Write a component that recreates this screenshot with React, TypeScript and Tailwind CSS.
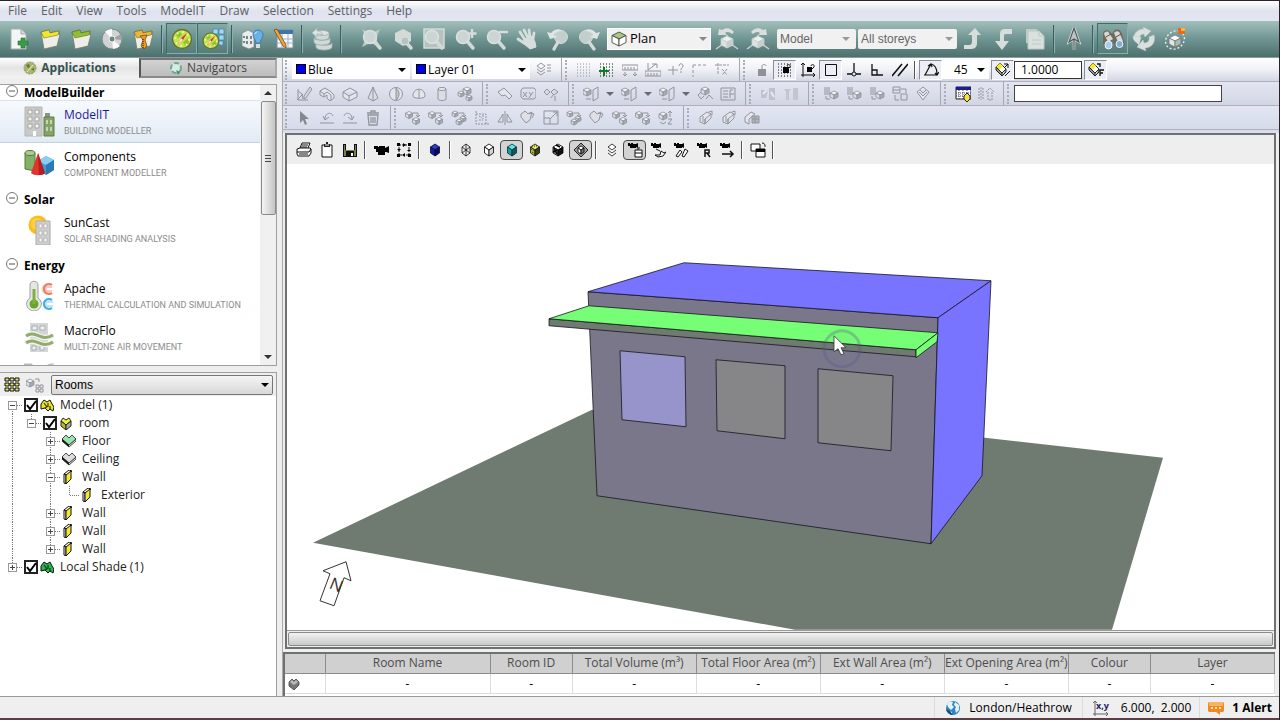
import { Fragment, useState } from "react";
import type { ReactNode } from "react";
import clsx from "clsx";

const menus = ["File", "Edit", "View", "Tools", "ModelIT", "Draw", "Selection", "Settings", "Help"];

type CubeProps = { x: number; y: number; s?: number; w?: number; t?: string; l?: string; r?: string; k?: string };

const Cube = ({ x, y, s = 4, w = s, t = "#f4f5f9", l = "#dcdee6", r = "#a9abb2", k = "#8d8f97" }: CubeProps) => (
  <g stroke={k} strokeWidth="0.8" strokeLinejoin="round">
    <path d={`M${x} ${y - s}L${x + w} ${y - s / 2}L${x} ${y}L${x - w} ${y - s / 2}Z`} fill={t} />
    <path d={`M${x - w} ${y - s / 2}L${x} ${y}V${y + s}L${x - w} ${y + s / 2}Z`} fill={l} />
    <path d={`M${x + w} ${y - s / 2}L${x} ${y}V${y + s}L${x + w} ${y + s / 2}Z`} fill={r} />
  </g>
);

const Camera = () => <path d="M1 1h2v1h1V1h2v1h3l2-1v5l-2-1v1H3V4H1Z" fill="#000" />;

const Lens = () => (
  <>
    <path d="M14 14l6 7" stroke="#d0d9d7" strokeWidth="3.5" strokeLinecap="round" />
    <circle cx="10" cy="10" r="6.5" fill="#cbd5d3" stroke="#dae1df" strokeWidth="1.5" />
  </>
);

const folder = (top: string, key: string) => (
  <>
    <path key={key} d="M3 5l8-2 1 3 9-2v4L5 11Z" fill={top} stroke="#5d6a2c" strokeWidth="0.7" />
    <path d="M3 5l3 5 16-3-3 12-13 3Z" fill="#eeeee6" stroke="#777a70" strokeWidth="0.8" />
    <path d="M3 5l8-2 1 3 9-2-1 4-14 3Z" fill={top} stroke="#5d6a2c" strokeWidth="0.5" />
  </>
);

const compass = (
  <>
    <circle cx="12" cy="12" r="9.5" fill="#cbe04f" stroke="#5e7724" strokeWidth="1.4" />
    <path d="M6 7l4-2 2 3-4 3ZM13 15l5-4 1 5-4 3Z" fill="#8fc42c" />
    <circle cx="12" cy="12" r="7" fill="none" stroke="#f1f6c0" strokeDasharray="1.5 4" strokeWidth="2" />
    <path d="M8 17l3-6 6-5-4 7Z" fill="#d33c28" />
    <path d="M8 17l3-6 2 2Z" fill="#f2efe4" />
  </>
);

// 24px drawings of the main toolbar
const big: Record<string, ReactNode> = {
  new: (
    <>
      <path d="M4 2h10l5 5v15H4Z" fill="#f4f6f5" stroke="#a5adab" />
      <path d="M14 2v5h5" fill="#d5dbd9" stroke="#a5adab" />
      <path d="M14 11h4v3h3v4h-3v3h-4v-3h-3v-4h3Z" fill="#3b9a45" stroke="#27742f" strokeWidth="0.6" />
    </>
  ),
  open: folder("#f3e52b", "y"),
  recent: folder("#91bf2e", "g"),
  disc: (
    <>
      <circle cx="12" cy="12" r="10" fill="#d0d3d3" stroke="#7f8886" />
      <path d="M12 12L5 4.500A10 10 0 0 1 12 2ZM12 12l8 7a10 10 0 0 1-7 3Z" fill="#fafafa" />
      <path d="M12 12L21 7a10 10 0 0 1 1 6Z" fill="#9da4a3" />
      <circle cx="12" cy="12" r="3" fill="#6f8583" stroke="#f0f0f0" />
    </>
  ),
  archive: (
    <>
      {folder("#f2b437", "o")}
      <path d="M9 9l7-1-2 5 2 6-3 3-3-3 2-6Z" fill="#e79b26" stroke="#784c14" strokeWidth="0.8" />
      <path d="M12 12v9" stroke="#5f3b10" strokeDasharray="1 1" strokeWidth="1.5" />
    </>
  ),
  compass,
  compassApps: (
    <>
      <path d="M12 2h5v5h-5ZM18 2h5v5h-5ZM18 8h5v5h-5ZM18 14h4v4h-4Z" fill="#a9d5ee" stroke="#3f8ab7" strokeWidth="0.8" />
      <g transform="translate(0 4) scale(.82)">{compass}</g>
    </>
  ),
  lighting: (
    <>
      <path d="M2 6l6-3 6 3v14l-5 2-7-3Z" fill="#e9ecec" stroke="#7e8987" strokeWidth="0.8" />
      <path d="M4 9v2M7 9v3M4 14v2M7 14v3M11 9v3M11 14v3" stroke="#576c70" strokeWidth="1.6" />
      <path d="M18 3a5 5 0 0 0-5 5c0 3 3 5 3 8h4c0-3 3-5 3-8a5 5 0 0 0-5-5Z" fill="#68b2e6" stroke="#2e77ad" strokeWidth="0.8" />
      <path d="M16 17h4v4h-4Z" fill="#d8dcdc" />
      <path d="M15 7c0-1 1-2 2-2" stroke="#e3f3fd" fill="none" />
    </>
  ),
  table: (
    <>
      <path d="M6 3h16v18H6Z" fill="#f5f7fa" stroke="#7e8d9d" />
      <path d="M6 3h16v4H6Z" fill="#3f75ad" />
      <path d="M6 12h16M6 16h16M11 7v14M17 7v14" stroke="#9bb4cd" />
      <path d="M3 3l3-1 9 16v3l-3-2Z" fill="#eda53c" stroke="#75481d" strokeWidth="0.8" />
    </>
  ),
  database: (
    <g fill="#d0d9d7" stroke="#a4b4b0" strokeWidth="0.8">
      <path d="M6 16v4c0 4 16 4 16 0v-4c0 3-16 3-16 0Z" />
      <path d="M4 11v4c0 4 16 4 16 0v-4c0 3-16 3-16 0Z" />
      <path d="M5 6v4c0 4 14 4 14 0V6Z" />
      <ellipse cx="12" cy="6" rx="7" ry="2.500" fill="#dde4e2" />
      <path d="M2 6l5-5v3c4 0 5 2 6 4-2-1-4-1-6-1v3Z" fill="#dde4e2" />
    </g>
  ),
  zoomExtents: (
    <>
      <path d="M2 2l6 3h6l6-3-3 7v5l3 6-7-3H8l-6 3 3-7V8Z" fill="#bccac7" />
      <Lens />
    </>
  ),
  zoomObject: (
    <>
      <path d="M12 2l8 4v8l-8 5-8-5V6Z" fill="#d3dbd9" />
      <path d="M14 14l6 7" stroke="#d0d9d7" strokeWidth="3.5" strokeLinecap="round" />
      <circle cx="14" cy="14" r="4" fill="#b5c4c1" stroke="#d8dfdd" />
    </>
  ),
  zoomWindow: (
    <>
      <path d="M2 2h20v19H2Z" fill="#b4c3c0" stroke="#d3dbd9" strokeWidth="1.500" />
      <Lens />
    </>
  ),
  zoomIn: (
    <>
      <Lens />
      <path d="M19 2v9M14.500 6.500h9" stroke="#d6dedc" strokeWidth="2.400" />
    </>
  ),
  zoomOut: (
    <>
      <Lens />
      <path d="M15 5h9" stroke="#d6dedc" strokeWidth="2.400" />
    </>
  ),
  pan: (
    <g fill="none" stroke="#d6dedc" strokeLinecap="round" strokeWidth="2.800">
      <path d="M10 13L5 5M13 11L9 3M15 10L14 3M18 12L19 6M9 16l-6-4" />
      <path d="M9 12l8-3 3 6 1 5-6 2-6-5Z" fill="#d6dedc" strokeWidth="1" strokeLinejoin="round" />
    </g>
  ),
  zoomPrev: (
    <>
      <circle cx="15" cy="10" r="6.500" fill="#c3cfcc" stroke="#d3dbd9" />
      <path d="M12 15l-4 7" stroke="#d3dbd9" strokeWidth="3.200" strokeLinecap="round" />
      <path d="M4 12L1 5l4 1c3-4 8-5 12-2-5 0-7 1-9 4l3 2Z" fill="#dfe5e4" />
    </>
  ),
  zoomNext: (
    <>
      <circle cx="9" cy="10" r="6.500" fill="#c3cfcc" stroke="#d3dbd9" />
      <path d="M12 15l5 7" stroke="#d3dbd9" strokeWidth="3.200" strokeLinecap="round" />
      <path d="M20 12l3-7-4 1c-3-4-8-5-12-2 5 0 7 1 9 4l-3 2Z" fill="#dfe5e4" />
    </>
  ),
  rotateLeft: (
    <>
      <path d="M1 22l7-5M23 22l-7-5M12 8v4" stroke="#c8d2d0" strokeWidth="1.500" />
      <Cube x={12} y={15} s={6} t="#eef1f0" l="#dde3e2" r="#c3cfcc" k="#c8d2d0" />
      <path d="M3 8l1-6 3 1c4-3 9-2 12 2l-2 2c-2-2-5-3-7-1l2 2Z" fill="#d8dfdd" />
    </>
  ),
  rotateRight: (
    <>
      <path d="M1 22l7-5M23 22l-7-5M12 8v4" stroke="#c8d2d0" strokeWidth="1.500" />
      <Cube x={12} y={15} s={6} t="#eef1f0" l="#dde3e2" r="#c3cfcc" k="#c8d2d0" />
      <path d="M21 8l-1-6-3 1c-4-3-9-2-12 2l2 2c2-2 5-3 7-1l-2 2Z" fill="#d8dfdd" />
    </>
  ),
  levelUp: <path d="M3 18l5 0c2 0 3-1 3-4V8H7l7-7 6 7h-4v8c0 5-3 6-7 6H3Z" fill="#d6dddb" />,
  levelDown: <path d="M20 2h-7c-4 0-5 2-5 6v6H3l7 9 7-9h-5V9c0-2 1-2 3-2h5Z" fill="#d6dddb" />,
  copy: (
    <>
      <path d="M3 2h11v14H3Z" fill="#c0ccca" />
      <path d="M5 4h11l5 5v13H5Z" fill="#d9e0de" stroke="#bccac7" />
      <path d="M16 4v5h5M9 13h9M9 17h9" stroke="#bccac7" fill="none" />
    </>
  ),
  north: (
    <>
      <path d="M12 1l5 14-5-3-5 3ZM12 12v11" fill="none" stroke="#e6ebea" strokeWidth="2.500" />
      <path d="M12 1l5 14-5-3-5 3ZM12 12v11" fill="#bcc7c5" stroke="#4e5958" strokeWidth="1.200" />
    </>
  ),
  binoculars: (
    <>
      <path d="M2 7c0-4 5-5 7-2l2 2 2-3c3-3 7-1 8 3l3 10-5 5-5-3-3-6-1 4-4 4-4-4Z" fill="#6e6a62" />
      <path d="M3 7c1-3 4-3 5-1l4 6-5 3ZM13 6c2-3 6-2 6 1l3 7-4 3Z" fill="#d9d7d0" />
      <path d="M5 10l5-3M15 10l5-3" stroke="#5a554c" />
      <ellipse cx="7.500" cy="18" rx="3.500" ry="4" fill="#a7cdea" stroke="#f0f3f5" />
      <ellipse cx="18.500" cy="17" rx="3.500" ry="3.500" fill="#7db1db" stroke="#f0f3f5" />
    </>
  ),
  refresh: (
    <g fill="#d9e0de" stroke="#c3cfcc" strokeWidth="0.500">
      <path d="M2 13C1 6 6 2 12 2l-1-2 8 4-6 6-1-3c-4 0-5 3-4 6Z" />
      <path d="M22 8c2 8-3 13-9 13l1 3-9-4 6-7 1 3c4 0 6-3 5-6Z" />
      <path d="M1 9l8 1-2 8-2-2c-3-2-4-4-4-7Z" />
    </g>
  ),
  orbit: (
    <>
      <ellipse cx="12" cy="13" rx="10" ry="8.500" transform="rotate(-40 12 13)" fill="none" stroke="#e8eded" strokeDasharray="2 2" strokeWidth="1.400" />
      <Cube x={12} y={14} s={6} t="#ffffff" l="#e4e7e7" r="#b0b9b8" k="#6d7877" />
      <path d="M15 1h7v6h-7Z" fill="#e66a1d" />
      <path d="M18 1h4v3h-4Z" fill="#f9b142" />
    </>
  ),
};

const gray = { stroke: "#92949c", fill: "none", strokeWidth: 1 };
const dark = { stroke: "#111", fill: "none", strokeWidth: 1 };
const arrow = <path d="M8 3h5v4M11 5l2 2 2-2" {...gray} />;
const distance = (
  <>
    <path d="M1 5l4-4 6 6-4 4Z" fill="#fff" stroke="#222" />
    <path d="M1 5l4-4 3 3-4 4Z" fill="#f3ea28" />
    <path d="M1 5l6 6v3L1 8ZM11 7v3l-4 4" fill="#999" stroke="#222" />
  </>
);

// 16px drawings of the small toolbars
const small: Record<string, ReactNode> = {
  layers: (
    <>
      <path d="M1 4l4-3 4 3-4 3ZM1 7l4 3 4-3M1 10l4 3 4-3" {...gray} />
      <path d="M11 3h4M11 6h4M11 9h4" {...gray} />
    </>
  ),
  grid: <path d="M1 2h15M1 5h15M1 8h15M1 11h15M1 14h15" {...gray} strokeDasharray="1 2" />,
  gridAxis: (
    <>
      <path d="M1 2h15M1 5h15M1 8h15M1 11h15M1 14h15" {...dark} strokeDasharray="1 2" />
      <path d="M5 5v9M0 9h10" stroke="#0d7a24" strokeWidth="2" />
    </>
  ),
  ruler: <path d="M0 3h16v5H0ZM3 5v3M6 5v3M9 5v3M12 5v3M3 10v4M13 10v4M1 12l2 2 2-2M11 12l2 2 2-2" {...gray} />,
  rulerAxis: <path d="M0 9h16v5H0ZM3 11v3M6 11v3M9 11v3M12 11v3M3 8V1M3 8l8-6M7 2h5v4" {...gray} />,
  query: (
    <>
      <path d="M5 4v9M0 8h10" {...gray} />
      <path d="M11 4c0-3 4-3 4 0 0 2-2 1-2 4M13 9v2" {...gray} />
    </>
  ),
  dashA: <path d="M2 3h13M2 3v12" {...gray} strokeDasharray="3 2" />,
  dashB: <path d="M1 3h14M4 1v12M8 7l5 6M13 7l-5 6" {...gray} strokeDasharray="3 1" />,
  lock: (
    <>
      <path d="M4 7h8v7H4Z" fill="#8f9198" />
      <path d="M8 7V4c0-2 4-2 4 0" {...gray} />
    </>
  ),
  snapGrid: (
    <>
      <path d="M1 2h15M1 5h15M1 8h15M1 11h15M1 14h15" {...dark} strokeDasharray="1 2" />
      <path d="M6 5h6v6H6Z" fill="#000" />
      <path d="M10 4c0-2 4-2 3 1l-2 2" {...dark} />
    </>
  ),
  snapAxis: (
    <>
      <path d="M3 1v12h12M1 3l2-2 2 2M13 11l2 2-2 2M1 13h2v2" {...dark} />
      <path d="M7 5h5v5H7Z" fill="#000" />
      <path d="M11 4c0-2 4-2 3 1l-2 2" {...dark} />
    </>
  ),
  square: <path d="M2.500 2.500h11v11h-11Z" {...dark} />,
  perp: (
    <>
      <path d="M8 1v9M1 12h5M10 12h5" {...dark} strokeWidth="1.300" />
      <circle cx="8" cy="12" r="2" {...dark} />
    </>
  ),
  corner: <path d="M3 2v11h11M3 8h5v5" {...dark} strokeWidth="1.300" />,
  parallel: <path d="M0 14L10 2M6 14L16 2" {...dark} strokeWidth="1.600" />,
  angle: <path d="M1 13h13M2 13L8 2c4 1 6 5 6 10M5 4l3-2 1 3M12 11l2 2 2-3" {...dark} strokeWidth="1.200" />,
  lockDist: (
    <>
      {distance}
      <path d="M9 2h4v4M9 6l4-4M10 14l5-5" {...dark} />
    </>
  ),
  lockFactor: (
    <>
      {distance}
      <path d="M9 2h3v3M12 14V8h4M12 11h3" {...dark} strokeWidth="1.300" />
    </>
  ),
  draw: (
    <>
      <path d="M2 3v11h10M2 5l4 3 1 5M1 14l6-6" {...gray} />
      <path d="M14 1l2 2-6 9-2 1v-3Z" {...gray} fill="#d7d9e1" />
    </>
  ),
  shapeL: <path d="M1 5l5-3 5 3 4 4v3l-4 3-3-3V9L5 11 1 9ZM1 5l4 3 3-2 4 3v5M5 8v3" {...gray} fill="#e5e6ed" />,
  prism: <path d="M1 6l7-4 7 4v5l-8 4-6-4ZM1 6l6 4 8-4M7 10v5" {...gray} fill="#e5e6ed" />,
  cone: <path d="M8 1L3 12l5 3 5-3ZM8 1v14" {...gray} fill="#dcdde4" />,
  sphere: (
    <>
      <circle cx="8" cy="8" r="6.500" {...gray} fill="#e5e6ed" />
      <path d="M8 2v12c3-2 5-8 0-12" {...gray} fill="#c3c5cd" />
    </>
  ),
  dome: <path d="M2 10c0-9 12-9 12 0 0 3-12 3-12 0M8 4v8" {...gray} fill="#e5e6ed" />,
  cylinder: (
    <>
      <path d="M4 3v10c0 2 8 2 8 0V3" {...gray} fill="#dcdde4" />
      <ellipse cx="8" cy="3" rx="4" ry="1.500" {...gray} fill="#eceef4" />
    </>
  ),
  cubes: (
    <>
      <Cube x={10} y={5} s={4} />
      <Cube x={4} y={8} s={3} />
      <Cube x={12} y={12} s={3} />
    </>
  ),
  plane: <path d="M1 6l6-4 8 8-3 3-4-4-3 1Z" {...gray} fill="#e5e6ed" />,
  xy: (
    <>
      <path d="M1 4l2-2h11l2 2v7l-2 2H3l-2-2Z" {...gray} />
      <path d="M3 6l4 5M7 6l-4 5M9 6l2 3M13 6l-4 6" {...gray} />
    </>
  ),
  points: <path d="M1 6l3-3 3 3-3 3ZM8 6l3-3 4 3-4 3ZM8 12l2-3M12 10v5" {...gray} fill="#d9dae2" />,
  door: (
    <>
      <Cube x={4} y={6} s={4} />
      <path d="M10 4l5-3v11l-5 3ZM3 13h5" {...gray} />
    </>
  ),
  cluster: (
    <>
      <Cube x={8} y={5} s={4} />
      <path d="M1 9l3-3M1 9l3 4 3-3M9 13l3-4 4 4" {...gray} />
    </>
  ),
  plan: <path d="M1 2h14v12H1ZM3 5h5M3 8h5M3 11h5M10 4v8M10 8h4M10 4h3" {...gray} />,
  stack: (
    <>
      <path d="M1 2h6M1 4h6M1 6h6M1 8h6M3 10v3h4" {...gray} />
      <Cube x={11} y={9} s={4} />
    </>
  ),
  boxesLinked: <path d="M1 1h7v6H1ZM9 8h6v6H9ZM1 4h7M9 3h5v4M3 9v5h4" {...gray} />,
  tiles: <path d="M8 1l6 5-6 8-6-8ZM4 6l4 4 4-4M5 4l3 3 3-3" {...gray} fill="#e8e9f0" />,
  faded: (
    <>
      <path d="M1 4h7l-2 8H1ZM9 2h6v12H9Z" fill="#bfc2cc" />
      <path d="M3 8l4-4M11 6l3 5" stroke="#e9eaf0" strokeWidth="2" />
    </>
  ),
  hammer: <path d="M1 3h7l-2 3v8H3V6ZM10 2h5v12h-5Z" fill="#c3c6cf" />,
  tableView: (
    <>
      <path d="M1 1h15v12H1Z" fill="#fff" stroke="#222" />
      <path d="M1 1h15v3H1Z" fill="#1b1b9b" />
      <path d="M1 7h15M1 10h15M4 4v9M8 4v9M12 4v9" stroke="#444" strokeDasharray="1 1" />
      <path d="M12 7l3 3v3l-3 3-3-3v-3Z" fill="#f4e63a" stroke="#222" />
    </>
  ),
  sort: <path d="M3 1v13M1 2v11M5 2v11M8 6l4-4 4 4M10 6v8h4V6" {...gray} strokeDasharray="2 1" />,
  pointer: <path d="M4 1v12l3-3 2 5 2-1-2-5h4Z" fill="#85878f" />,
  undo: <path d="M1 13h14M6 9c0-7 7-7 8-3M4 6l2 4 4-3" {...gray} />,
  redo: <path d="M1 13h14M10 9c0-7-7-7-8-3M12 6l-2 4-4-3" {...gray} />,
  trash: <path d="M3 5h10l-1 10H4ZM2 3h12M6 3V1h4v2M6 7v6M8 7v6M10 7v6" {...gray} strokeWidth="1.300" />,
  copyCube: (
    <>
      <Cube x={4} y={5} s={3.5} />
      <Cube x={11} y={11} s={3.5} />
      {arrow}
    </>
  ),
  arrayCube: (
    <>
      <Cube x={4} y={4} s={3} />
      <Cube x={12} y={9} s={3} />
      <Cube x={8} y={12} s={3} />
      {arrow}
    </>
  ),
  bounds: <path d="M2 1v13h14M2 4h10v10M5 6l3 2M9 5v4M5 10h4" {...gray} strokeDasharray="2 1" />,
  mirror: <path d="M8 1v14M6 4v8H1ZM10 4v8h5Z" {...gray} />,
  turn: (
    <>
      <path d="M1 4l4-3 3 3 4-2-2 8-4 3-5-6Z" {...gray} fill="#dfe0e7" />
      <path d="M9 3l5 1-2 4" {...gray} />
    </>
  ),
  resize: <path d="M1 1h14v13H1ZM1 8h6v6M7 9l7-7M10 2h4v4" {...gray} />,
  heightZ: (
    <>
      <Cube x={5} y={6} s={4} />
      <path d="M12 1v6M10 3l2-2 2 2M10 9h4l-4 5h4M2 12l3 2 3-2" {...gray} />
    </>
  ),
  slab: <path d="M2 7l7-5 4 2-6 5v5l-5-2ZM7 9v5M5 6v6M13 4v4l-6 6M11 2l3-1v4" {...gray} fill="#e5e6ed" />,
  slabGrid: (
    <>
      <path d="M1 7l6-5 4 2-6 5v5l-4-2Z" {...gray} fill="#e5e6ed" />
      <path d="M8 6h7v7H8ZM8 9h7M11 6v7" {...gray} fill="#b3b5bd" />
    </>
  ),
  print: (
    <>
      <path d="M4 6l2-5h8l-2 5" {...dark} fill="#fff" />
      <path d="M1 7l3-1h10l1 1v4l-2 3H2l-1-2ZM1 10h12l2-3M6 3h6M5 5h6M3 12h9" {...dark} fill="#fff" />
    </>
  ),
  clipboard: (
    <>
      <path d="M3 3h10v12H3Z" {...dark} fill="#fff" />
      <path d="M5 2h6v3H5ZM7 0h2v2H7Z" fill="#222" />
      <path d="M6 3h4" stroke="#fff" />
    </>
  ),
  save: (
    <>
      <path d="M1 2h14v13H1Z" fill="#111" />
      <path d="M4 2h8v6H4Z" fill="#efefef" />
      <path d="M2 3v11h2V9h8v5h2V3h-1v5H3V3Z" fill="#7d8347" />
      <path d="M9 11h2v3H9Z" fill="#fff" />
    </>
  ),
  camera: <path d="M1 4h4v1h1V4h6v2l4-2v7l-3-1h-1v3H5v-3H3V7H1Z" fill="#000" />,
  frame: (
    <>
      <path d="M3 3h10v10H3Z" {...dark} strokeDasharray="2 1" />
      <path d="M1 1h3v3H1ZM12 1h3v3h-3ZM1 12h3v3H1ZM12 12h3v3h-3ZM7 1l3 2-3 2ZM9 11l-3 2 3 2ZM1 7l2 2 2-2ZM11 9l2-2 2 2Z" fill="#000" />
    </>
  ),
  navy: <Cube x={8} y={8} s={6} w={4.500} t="#3238c8" l="#1119a8" r="#070c5a" k="#050838" />,
  wire: <path d="M8 2l4 3v6l-4 3-4-3V5ZM8 2v12M4 5l8 6M12 5l-8 6" {...dark} strokeWidth="0.800" />,
  hidden: <Cube x={8} y={8} s={6} w={4.500} t="#fff" l="#fff" r="#d5d5d5" k="#000" />,
  cyan: <Cube x={8} y={8} s={6} w={4.500} t="#58e6e6" l="#13a0a4" r="#0c5b60" k="#052b2e" />,
  olive: (
    <>
      <Cube x={8} y={8} s={6} w={4.500} t="#e6ec64" l="#b7bf35" r="#3b3e18" k="#111" />
      <path d="M4 7l4 2M5 10l3 2M5 4h6" stroke="#222" strokeDasharray="1 1" />
    </>
  ),
  checker: (
    <>
      <Cube x={8} y={8} s={6} w={5} t="#fff" l="#777" r="#111" k="#000" />
      <path d="M4 6l3 6M3 10l4-2M6 3l4 2" stroke="#000" strokeWidth="1.500" />
    </>
  ),
  diamond: (
    <>
      <path d="M8 1l7 7-7 7-7-7Z" fill="#999" stroke="#222" />
      <Cube x={8} y={8} s={4} w={3} t="#fff" l="#fff" r="#777" k="#000" />
    </>
  ),
  sheets: <path d="M8 2l4 3-4 3-4-3ZM4 8l4 3 4-3M4 11l4 3 4-3" {...dark} fill="#fff" strokeWidth="0.800" />,
  camMouse: (
    <>
      <Camera />
      <path d="M8 8h7v7H8ZM8 11h7M11 8V6h2" {...dark} fill="#fff" />
    </>
  ),
  camFly: (
    <>
      <Camera />
      <path d="M5 13h5l1-4 3 2 2-1-3 4-5 1ZM6 7l4 2" {...dark} fill="#fff" />
    </>
  ),
  camWalk: (
    <>
      <Camera />
      <path d="M3 14l4-6 2 2-4 5ZM9 14l3-7 3 2-4 6Z" {...dark} fill="#fff" />
    </>
  ),
  camReset: (
    <>
      <Camera />
      <path d="M9 15V8h4v3H9M11 11l3 4" {...dark} strokeWidth="1.500" />
    </>
  ),
  camMove: (
    <>
      <Camera />
      <path d="M3 12h11M11 9l3 3-3 3" {...dark} strokeWidth="1.500" />
    </>
  ),
  windows: (
    <>
      <path d="M1 2h9v7H1Z" {...dark} fill="#fff" />
      <path d="M6 7h9v8H6Z" {...dark} fill="#fff" />
      <path d="M6 7h9v3H6Z" fill="#000" />
      <path d="M12 1c3 0 3 2 3 4" {...dark} />
    </>
  ),
};

const appIcons: Record<string, ReactNode> = {
  modelit: (
    <>
      <path d="M1 1h17v29H1Z" fill="#c9cac8" stroke="#b4b5b3" />
      <path d="M4 4h4v4H4ZM11 4h4v4h-4ZM4 11h4v4H4ZM11 11h4v4h-4ZM4 18h4v4H4ZM11 18h4v4h-4Z" fill="#f3f3f2" stroke="#a5a6a4" />
      <path d="M9 25h3v5H9Z" fill="#fff" />
      <path d="M21 7h5v4h-5Z" fill="#8b9389" />
      <path d="M20 11h10v19H20Z" fill="#86a267" stroke="#5f7c44" />
      <path d="M22 14h2v4h-2ZM26 14h2v4h-2ZM22 21h2v4h-2ZM26 21h2v4h-2Z" fill="#c3d5b2" />
    </>
  ),
  components: (
    <>
      <path d="M1 5v16l10 2V5Z" fill="#83b168" stroke="#58783f" />
      <ellipse cx="6" cy="5" rx="5" ry="2.500" fill="#a9cf8f" stroke="#58783f" />
      <path d="M14 13l8-5 8 4v10l-8 5-8-5Z" fill="#3f9ad8" />
      <path d="M14 13l8-5 8 4-8 5Z" fill="#89cdf2" />
      <path d="M22 17v10l8-5V12Z" fill="#2a78b4" />
      <path d="M14 5l7 20c-3 3-11 3-14 0Z" fill="#e0342f" />
      <path d="M14 5l7 20c-2 2-4 2-6 2Z" fill="#b51f20" />
    </>
  ),
  suncast: (
    <>
      <circle cx="14" cy="11" r="9.500" fill="#fbbd16" />
      <circle cx="13" cy="10" r="6" fill="#fdd143" />
      <path d="M12 7h14v24H12Z" fill="#cfcfcf" stroke="#aaa" />
      <path d="M15 10h3v4h-3ZM20 10h3v4h-3ZM15 17h3v4h-3ZM20 17h3v4h-3ZM15 24h3v4h-3ZM20 24h3v4h-3Z" fill="#f5f5f5" stroke="#aaa" strokeWidth="0.700" />
    </>
  ),
  apache: (
    <>
      <path d="M6 5c0-5 8-5 8 0v13c7 5 2 13-4 13S-1 23 6 18Z" fill="#e3e6e3" stroke="#9ca19c" />
      <circle cx="10" cy="24" r="4.500" fill="#6aa62d" />
      <path d="M10 24V9" stroke="#7fb044" strokeWidth="3" />
      <circle cx="23" cy="9" r="5.500" fill="#f6c9c1" />
      <circle cx="24" cy="24" r="5.500" fill="#bfe3f7" />
      <path d="M28 5a5 5 0 1 0 0 8" fill="none" stroke="#e87b68" strokeWidth="2" />
      <path d="M28 20a5 5 0 1 0 0 8" fill="none" stroke="#3cabea" strokeWidth="2" />
      <path d="M23 9h6M23 24h6" stroke="#fff" strokeWidth="2" />
    </>
  ),
  macroflo: (
    <>
      <path d="M6 1h18v29H6Z" fill="#d3d5d6" />
      <path d="M8 4h5v4H8ZM16 4h5v4h-5ZM8 24h4v4H8ZM16 24h4v4h-4Z" fill="#f2f2f2" stroke="#aaafb3" />
      <path d="M2 14c10-7 15 7 27-1M2 21c10-7 15 7 27-1" fill="none" stroke="#f4f6ef" strokeWidth="5.500" />
      <path d="M2 14c10-7 15 7 27-1M2 21c10-7 15 7 27-1" fill="none" stroke="#93ab6d" strokeWidth="3" />
    </>
  ),
};

const groups = [
  { name: "ModelBuilder", apps: [
    { id: "modelit", title: "ModelIT", note: "BUILDING MODELLER" },
    { id: "components", title: "Components", note: "COMPONENT MODELLER" },
  ] },
  { name: "Solar", apps: [{ id: "suncast", title: "SunCast", note: "SOLAR SHADING ANALYSIS" }] },
  { name: "Energy", apps: [
    { id: "apache", title: "Apache", note: "THERMAL CALCULATION AND SIMULATION" },
    { id: "macroflo", title: "MacroFlo", note: "MULTI-ZONE AIR MOVEMENT" },
  ] },
];

type Guide = "plusTop" | "plus" | "plusEnd" | "minusTop" | "minus" | "minusEnd" | "line" | "none" | "corner";
type TreeRow = { label: string; guides: Guide[]; icon: string; check?: boolean };

const tree: TreeRow[] = [
  { label: "Model (1)", guides: ["minusTop"], icon: "model", check: true },
  { label: "room", guides: ["line", "minusEnd"], icon: "room", check: true },
  { label: "Floor", guides: ["line", "none", "plus"], icon: "floor" },
  { label: "Ceiling", guides: ["line", "none", "plus"], icon: "ceiling" },
  { label: "Wall", guides: ["line", "none", "minus"], icon: "wall" },
  { label: "Exterior", guides: ["line", "none", "line", "corner"], icon: "wall" },
  { label: "Wall", guides: ["line", "none", "plus"], icon: "wall" },
  { label: "Wall", guides: ["line", "none", "plus"], icon: "wall" },
  { label: "Wall", guides: ["line", "none", "plusEnd"], icon: "wall" },
  { label: "Local Shade (1)", guides: ["plusEnd"], icon: "shade", check: true },
];

const heart = (fill: string) => (
  <>
    <path d="M0 5v2l7 6 7-6V5L7 11Z" fill="#fff" stroke="#111" strokeWidth="0.800" />
    <path d="M0 5l4-4 3 3 3-3 4 4-7 6Z" fill={fill} stroke="#222" strokeWidth="0.800" />
    <path d="M0 5v2l7 6v-2Z" fill="#111" />
  </>
);

const bunch = (c: string, d: string) => (
  <>
    <path d="M1 6l3-4 3 2 3-2 2 4 2 3-1 4-3-2-2 2-3-3-4 1Z" fill={c} stroke="#111" />
    <path d="M4 5l3 4M8 5v4M10 8v4M5 10l3-2" stroke={d} strokeWidth="1.200" />
  </>
);

const treeIcons: Record<string, ReactNode> = {
  model: bunch("#e8e32d", "#3a3a0b"),
  shade: bunch("#2eb552", "#0b3d18"),
  room: (
    <>
      <path d="M2 5l2-3 3 2 3-2 2 3-5 4Z" fill="#eef03a" stroke="#222" />
      <path d="M2 5l5 4v5l-5-4Z" fill="#b9b92c" stroke="#222" />
      <path d="M12 5L7 9v5l5-4Z" fill="#aaa" stroke="#222" />
    </>
  ),
  floor: heart("#94e8ae"),
  ceiling: heart("#dddddd"),
  wall: (
    <>
      <path d="M2 4l5-4 3 1-5 4Z" fill="#fffef0" stroke="#111" />
      <path d="M2 4l2 1v9l-2-1Z" fill="#fff" stroke="#111" />
      <path d="M4 5l5-4v8l-5 5Z" fill="#f5e92c" stroke="#111" />
    </>
  ),
};

const columns = [
  { label: "", width: "w-[40px]" },
  { label: "Room Name", width: "w-[165px]" },
  { label: "Room ID", width: "w-[82px]" },
  { label: "Total Volume (m³)", width: "w-[124px]" },
  { label: "Total Floor Area (m²)", width: "w-[124px]" },
  { label: "Ext Wall Area (m²)", width: "w-[124px]" },
  { label: "Ext Opening Area (m²)", width: "w-[124px]" },
  { label: "Colour", width: "w-[82px]" },
  { label: "Layer", width: "w-[124px]" },
];

const Caret = ({ className }: { className?: string }) => (
  <svg viewBox="0 0 8 4" className={clsx("pointer-events-none h-1 w-2", className)}>
    <path d="M0 0h8L4 4Z" fill="currentColor" />
  </svg>
);

const MainButton = ({ name, on }: { name: string; on?: boolean }) => (
  <button
    type="button"
    aria-label={name}
    className={clsx("flex h-[31px] w-[31px] shrink-0 items-center justify-center", on && "border border-[#86b0ad] border-t-[#3c6d6b] border-l-[#3c6d6b] bg-[#5e8785]/30")}
  >
    <svg viewBox="0 0 24 24" className="h-6 w-6">{big[name]}</svg>
  </button>
);

const MainSep = () => <span className="mx-[3px] h-7 w-0.5 shrink-0 border-r border-[#8fb0ae] bg-[#35605f]" />;

const Tool = ({ name, on, rounded }: { name: string; on?: boolean; rounded?: boolean }) => (
  <button
    type="button"
    aria-label={name}
    className={clsx(
      "flex h-5 w-[23px] shrink-0 items-center justify-center",
      on && !rounded && "border border-[#8a8d98] border-r-white border-b-white bg-[#eceef5]",
      on && rounded && "rounded-sm border border-[#4a4a4a] bg-[#d3d3d3]",
    )}
  >
    <svg viewBox="0 0 16 16" className="h-4 w-4">{small[name]}</svg>
  </button>
);

const Tools = ({ names }: { names: string[] }) => names.map((name, i) => <Tool key={i} name={name} />);

const Group = ({ children, last }: { children: ReactNode; last?: boolean }) => (
  <div className={clsx("mr-px flex h-full shrink-0 items-center pr-1.5", !last && "border-r border-[#a5a8b3]")}>
    <span className="mr-1 ml-0.5 h-5 w-[3px] border-l-2 border-dotted border-[#a9acb8]" />
    {children}
  </div>
);

const ViewSep = () => <span className="mx-[3px] h-[18px] w-0.5 shrink-0 border-r border-white bg-[#555]" />;

type PickProps = { label: string; value: string; className: string; selectClass: string; caretClass?: string; icon?: ReactNode };

const Pick = ({ label, value, className, selectClass, caretClass, icon }: PickProps) => (
  <div className={clsx("relative shrink-0", className)}>
    <select aria-label={label} className={clsx("block h-full w-full appearance-none outline-none", selectClass)}>
      <option>{value}</option>
    </select>
    {icon}
    <Caret className={clsx("absolute top-1/2 -mt-0.5", caretClass)} />
  </div>
);

const Swatch = () => <span className="pointer-events-none absolute top-1 left-1 h-[10px] w-[10px] border border-black bg-[#0000f0]" />;

const GuideCell = ({ kind }: { kind: Guide }) => {
  const toggle = kind.startsWith("plus") || kind.startsWith("minus");
  const up = kind !== "none" && kind !== "minusTop" && kind !== "plusTop";
  const down = kind === "line" || kind === "plus" || kind === "minus" || kind.endsWith("Top");
  return (
    <svg viewBox="0 0 19 18" className="h-[18px] w-[19px] shrink-0">
      <g stroke="#777" strokeDasharray="1 1" fill="none">
        {up && <path d="M9.500 0v9" />}
        {down && <path d="M9.500 9v9" />}
        {(toggle || kind === "corner") && <path d="M10 9.500h9" />}
      </g>
      {toggle && (
        <>
          <rect x="5.500" y="5.500" width="8" height="8" fill="#fff" stroke="#999" />
          <path d={kind.startsWith("plus") ? "M7 9.500h5M9.500 7v5" : "M7 9.500h5"} stroke="#445" />
        </>
      )}
    </svg>
  );
};

const MainToolbar = () => (
  <div className="flex h-[37px] shrink-0 items-center overflow-hidden border-b border-[#8b9c9a] bg-linear-to-b from-[#a3bfbc] via-[#6f9592] to-[#4c706e] pb-px pl-[3px]">
    {["new", "open", "recent", "disc", "archive"].map((n) => <MainButton key={n} name={n} />)}
    <MainSep />
    <MainButton name="compass" on />
    <MainButton name="compassApps" on />
    <MainSep />
    <MainButton name="lighting" />
    <MainButton name="table" />
    <MainSep />
    <MainButton name="database" />
    <MainSep />
    <div className="ml-[11px] flex">
      {["zoomExtents", "zoomObject", "zoomWindow", "zoomIn", "zoomOut", "pan", "zoomPrev", "zoomNext"].map((n) => (
        <MainButton key={n} name={n} />
      ))}
    </div>
    <Pick
      label="View"
      value="Plan"
      className="ml-[3px] h-[22px] w-[104px]"
      selectClass="bg-[#f1f1f1] border border-white pl-[22px] text-[13px] text-black"
      caretClass="right-1 text-[#888]"
      icon={
        <svg viewBox="0 0 16 16" className="pointer-events-none absolute top-[3px] left-1 h-4 w-4">
          <Cube x={8} y={8} s={7} t="#a9c97f" l="#fff" r="#fff" k="#333" />
        </svg>
      }
    />
    <MainButton name="rotateLeft" />
    <MainButton name="rotateRight" />
    <Pick
      label="Model view"
      value="Model"
      className="ml-1 h-5 w-[79px]"
      selectClass="rounded-xs bg-[#f1f1f1] pl-[3px] font-['Liberation_Sans'] text-xs text-[#666]"
      caretClass="right-1.5 text-[#999]"
    />
    <Pick
      label="Storeys"
      value="All storeys"
      className="ml-0.5 h-5 w-[99px]"
      selectClass="rounded-xs bg-[#f1f1f1] pl-[3px] font-['Liberation_Sans'] text-xs text-[#666]"
      caretClass="right-1 text-[#999]"
    />
    <MainButton name="levelUp" />
    <MainButton name="levelDown" />
    <MainButton name="copy" />
    <MainSep />
    <MainButton name="north" />
    <MainSep />
    <MainButton name="binoculars" on />
    <MainButton name="refresh" />
    <MainButton name="orbit" />
  </div>
);

const bar = "flex h-6 items-center overflow-hidden border-b border-[#aeb1bd] bg-linear-to-b";

const DrawToolbars = () => (
  <div className="shrink-0 bg-[#d9ddec] pb-[3px]">
    <div className={clsx(bar, "from-white via-[#f0f1f6] to-[#d4d7e3]")}>
      <Group>
        <Pick label="Colour" value="Blue" className="h-[19px] w-[118px]" selectClass="bg-white pl-4 text-xs text-black" caretClass="right-1" icon={<Swatch />} />
        <Pick label="Layer" value="Layer 01" className="ml-0.5 h-[19px] w-[118px]" selectClass="bg-white pl-4 text-xs text-black" caretClass="right-1" icon={<Swatch />} />
        <span className="w-0.5" />
        <Tool name="layers" />
      </Group>
      <Group>
        <Tools names={["grid", "gridAxis", "ruler", "rulerAxis", "query", "dashA", "dashB"]} />
      </Group>
      <Group last>
        <Tool name="lock" />
        <Tool name="snapGrid" on />
        <Tool name="snapAxis" />
        <Tool name="square" on />
        <Tools names={["perp", "corner", "parallel"]} />
        <ViewSep />
        <Tool name="angle" on />
        <Pick label="Angle" value="45" className="h-[19px] w-[47px]" selectClass="bg-white pl-3 text-xs text-black" caretClass="right-1" />
        <span className="w-0.5" />
        <Tool name="lockDist" on />
        <input aria-label="Distance" defaultValue="1.0000" className="h-[18px] w-[68px] border border-[#333] bg-white px-1.5 text-xs text-black" />
        <span className="w-0.5" />
        <Tool name="lockFactor" on />
      </Group>
    </div>
    <div className={clsx(bar, "from-[#e3e6f1] to-[#d2d6e4]")}>
      <Group>
        <Tools names={["draw", "shapeL", "prism", "cone", "sphere", "dome", "cylinder", "cubes"]} />
      </Group>
      <Group>
        <Tools names={["plane", "xy", "points"]} />
      </Group>
      <Group>
        {[0, 1, 2].map((i) => (
          <Fragment key={i}>
            <Tool name="door" />
            <button type="button" aria-label="More" className="flex h-5 w-[15px] items-center justify-center text-[#666a76]"><Caret /></button>
          </Fragment>
        ))}
        <Tools names={["cluster", "plan"]} />
      </Group>
      <Group>
        <Tools names={["faded", "hammer"]} />
      </Group>
      <Group>
        <Tools names={["stack", "stack", "stack", "boxesLinked", "tiles"]} />
      </Group>
      <Group>
        <Tools names={["tableView", "sort"]} />
      </Group>
      <Group last>
        <input aria-label="Command" className="h-[17px] w-[208px] border border-[#444] bg-white px-1 text-xs" />
      </Group>
    </div>
    <div className={clsx(bar, "from-[#e3e6f1] to-[#d6dbeb]")}>
      <Group>
        <Tools names={["pointer", "undo", "redo", "trash"]} />
      </Group>
      <Group>
        <Tools names={["copyCube", "copyCube", "arrayCube", "bounds", "mirror", "turn", "resize", "arrayCube", "turn", "copyCube", "copyCube", "heightZ"]} />
      </Group>
      <Group last>
        <Tools names={["slab", "slab", "slabGrid"]} />
      </Group>
    </div>
  </div>
);

const ViewToolbar = () => (
  <div className="flex h-[29px] shrink-0 items-center bg-[#eeeeee] pl-[5px]">
    <Tools names={["print", "clipboard", "save"]} />
    <ViewSep />
    <Tools names={["camera", "frame"]} />
    <ViewSep />
    <Tool name="navy" />
    <ViewSep />
    <Tools names={["wire", "hidden"]} />
    <Tool name="cyan" on rounded />
    <Tools names={["olive", "checker"]} />
    <Tool name="diamond" on rounded />
    <ViewSep />
    <Tool name="sheets" />
    <Tool name="camMouse" on rounded />
    <Tools names={["camFly", "camWalk", "camReset", "camMove"]} />
    <ViewSep />
    <Tool name="windows" />
    <ViewSep />
  </div>
);

const Scene = () => (
  <div className="min-h-0 flex-1 bg-white">
    <svg viewBox="287 164 987 466" preserveAspectRatio="xMidYMid slice" className="h-full w-full">
      <path d="M313 543L592 410L985 438L1163 458L1112 630H795Z" fill="#6f7a71" />
      <g stroke="#15151c" strokeWidth="0.800" strokeLinejoin="round">
        <path d="M588 292L938 318L931 544L597 496Z" fill="#7a778b" />
        <path d="M684 263L991 281L938 318L588 292Z" fill="#7874ff" />
        <path d="M938 318L991 281L982 476L931 544Z" fill="#7874ff" />
        <path d="M620 351L685 357L686 427L622 420Z" fill="#9794cb" />
        <path d="M716 360L785 366L785 439L717 431Z" fill="#868688" />
        <path d="M818 369L893 376L891 451L818 443Z" fill="#868688" />
        <path d="M549 319L916 350V357L549 326Z" fill="#6f7a71" />
        <path d="M549 319L589 306L938 333L916 350Z" fill="#76ff76" />
        <path d="M916 350L938 333L937 342L916 358Z" fill="#76ff76" />
      </g>
      <circle cx="842" cy="349" r="18" fill="#7070a0" fillOpacity="0.060" stroke="#55558a" strokeOpacity="0.300" strokeWidth="3" />
      <path d="M834 336V352L838 349L841 355L844 354L841 348H846Z" fill="#fff" stroke="#333" strokeWidth="0.800" />
      <path d="M346 562L351 581L344 578L334 606L320 601L330 574L323 571Z" fill="#fff" stroke="#333" />
      <text x="336" y="591" textAnchor="middle" transform="rotate(22 336 586)" fontSize="17" fill="#333">N</text>
    </svg>
  </div>
);

const RoomTable = () => (
  <div className="mr-1 shrink-0 border-t-2 border-l-2 border-[#6d716f] bg-white pb-0.5">
    <table className="w-full table-fixed border-collapse text-xs">
      <thead>
        <tr className="h-5 bg-[#d0d0d0] text-[#4c4c4c]">
          {columns.map((col, i) => (
            <th key={i} className={clsx("overflow-hidden border-r border-b border-[#8c8c8c] p-0 leading-4 font-normal whitespace-nowrap", col.width)}>{col.label}</th>
          ))}
        </tr>
      </thead>
      <tbody>
        <tr className="h-5">
          {columns.map((col, i) => (
            <td key={i} className="border-r border-b border-[#dcdcdc] p-0 text-center leading-4">
              {i === 0 ? (
                <svg viewBox="0 0 12 12" className="ml-[3px] h-3 w-3">
                  <path d="M1 4l3-3 2 2 2-2 3 3v3l-5 5-5-4Z" fill="#777" stroke="#444" strokeWidth="0.800" />
                  <path d="M2 4l2-2 2 2 2-2 2 2-4 3Z" fill="#bbb" />
                </svg>
              ) : (
                "-"
              )}
            </td>
          ))}
        </tr>
      </tbody>
    </table>
  </div>
);

const AppList = () => {
  const [active, setActive] = useState("modelit");
  return (
    <div className="flex h-[282px] shrink-0 overflow-hidden border-y border-r border-[#a0a0a0] bg-white">
      <div className="min-w-0 flex-1">
        {groups.map((group, gi) => (
          <section key={group.name}>
            <h2 className={clsx("flex items-center pl-1.5 text-xs font-bold text-black", gi === 0 ? "h-4 border-b border-[#dde3ea]" : "h-6 pt-1.5")}>
              <svg viewBox="0 0 12 12" className="mr-1.5 mb-1 h-3 w-3">
                <circle cx="6" cy="6" r="5.500" fill="#fff" stroke="#777" />
                <path d="M3 6h6" stroke="#555" />
              </svg>
              {group.name}
            </h2>
            {group.apps.map((app) => (
              <button
                key={app.id}
                type="button"
                onClick={() => setActive(app.id)}
                className={clsx(
                  "flex h-[42px] w-full items-center border-b pl-6 text-left",
                  app.id === active ? "border-[#c3d2e2] bg-linear-to-b from-[#f7fafd] to-[#e2ebf5] text-[#1a1a9c]" : "border-transparent text-black",
                )}
              >
                <svg viewBox="0 0 31 31" className="mr-[9px] h-[31px] w-[31px] shrink-0">{appIcons[app.id]}</svg>
                <span className="pt-0.5">
                  <span className="block text-xs leading-4">{app.title}</span>
                  <span className="block font-[Roboto] text-[9px] leading-4 whitespace-nowrap text-[#8c8c8c]">{app.note}</span>
                </span>
              </button>
            ))}
          </section>
        ))}
        <svg viewBox="0 0 31 8" className="mt-1 ml-6 h-2 w-[31px]">
          <path d="M0 1h8v2H0ZM20 4l6-3h4" fill="#bbb" stroke="#bbb" />
        </svg>
      </div>
      <div className="flex w-4 shrink-0 flex-col items-center bg-[#f0f0f0]">
        <Caret className="my-1.5 rotate-180 text-[#333]" />
        <div className="flex h-[114px] w-[15px] shrink-0 items-center justify-center rounded-xs border border-[#8a8a8a] bg-linear-to-r from-[#f5f5f5] to-[#c5c5c5]">
          <span className="h-[7px] w-1.5 border-y border-[#444] bg-[linear-gradient(#444,#444)] bg-size-[100%_1px] bg-center bg-no-repeat" />
        </div>
        <Caret className="mt-auto mb-1.5 text-[#333]" />
      </div>
    </div>
  );
};

const ModelTree = () => (
  <div className="flex min-h-0 flex-1 flex-col border-t border-r border-[#a0a0a0] bg-white">
    <div className="flex h-[23px] shrink-0 items-center bg-[#eeeeee] pr-[3px] pl-1">
      <svg viewBox="0 0 16 16" className="h-4 w-4">
        <path d="M1 1h4v3H1ZM6 1h4v3H6ZM11 1h4v3h-4ZM1 6h4v3H1ZM6 6h4v3H6ZM11 6h4v3h-4ZM1 11h4v3H1ZM6 11h4v3H6ZM11 11h4v3h-4Z" fill="#e9e36c" stroke="#111" />
      </svg>
      <svg viewBox="0 0 18 16" className="mx-1.5 h-4 w-[18px]">
        <Cube x={4} y={6} s={4} />
        <path d="M9 2h4v3M10 8h3v3h-3ZM14 8h3v3h-3ZM10 12h3v3h-3ZM14 12h3v3h-3Z" {...gray} />
      </svg>
      <Pick
        label="Tree contents"
        value="Rooms"
        className="ml-px h-5 min-w-0 flex-1"
        selectClass="rounded-xs border border-[#777] bg-linear-to-b from-[#f5f5f5] to-[#d8d8d8] pl-[3px] font-['Liberation_Sans'] text-xs text-black"
        caretClass="right-1"
      />
    </div>
    <ul>
      {tree.map((row, i) => (
        <li key={i} className="flex h-[18px] items-center pl-[3px]">
          {row.guides.map((kind, gi) => <GuideCell key={gi} kind={kind} />)}
          {row.check && (
            <span className="relative ml-0.5 h-[14px] w-[14px] shrink-0">
              <input type="checkbox" id={`node-${i}`} defaultChecked className="peer block h-[14px] w-[14px] appearance-none border-2 border-[#222] bg-white" />
              <svg viewBox="0 0 14 14" className="pointer-events-none absolute inset-0 hidden peer-checked:block">
                <path d="M3 7l3 4 6-8" fill="none" stroke="#000" strokeWidth="2" />
              </svg>
            </span>
          )}
          <svg viewBox="0 0 14 14" className="mr-1.5 ml-0.5 h-[14px] w-[14px] shrink-0">{treeIcons[row.icon]}</svg>
          {row.check ? (
            <label htmlFor={`node-${i}`} className="text-xs leading-4 text-[#222]">{row.label}</label>
          ) : (
            <span className="text-xs leading-4 text-[#222]">{row.label}</span>
          )}
        </li>
      ))}
    </ul>
  </div>
);

const StatusBar = () => (
  <footer className="flex h-6 shrink-0 items-center justify-end border-t border-b-2 border-t-[#999] border-b-[#5b3f45] bg-[#efefef] pr-[7px] text-xs text-black">
    <div className="flex h-full items-center border-l border-[#dcdcdc] pr-2.5 pl-2.5">
      <svg viewBox="0 0 16 16" className="mr-2 h-4 w-4">
        <circle cx="8" cy="8" r="7" fill="#2e86c6" />
        <path d="M2 4c2-3 5-3 6-2L7 5l2 2-3 3-3-3ZM10 2l4 3v5l-3 3-1-4 1-2-2-2ZM5 11l2 1v3Z" fill="#e6f1f8" />
        <path d="M1 9c1 4 4 6 7 6l-3-4Z" fill="#1c4d78" />
      </svg>
      London/Heathrow
    </div>
    <div className="flex h-full items-center border-l border-[#dcdcdc] pr-2 pl-2.5 whitespace-pre">
      <svg viewBox="0 0 16 16" className="mr-3 h-4 w-4 overflow-visible">
        <path d="M2 1v13h13M0 3l2-2 2 2M13 12l2 2-2 2M0 14h2v2" fill="none" stroke="#666" />
        <text x="3" y="9" fontSize="9" fontWeight="bold" fill="#22226b">x,y</text>
      </svg>
      {"6.000,  2.000"}
    </div>
    <div className="flex h-full items-center border-l border-[#dcdcdc] pl-2 font-bold">
      <svg viewBox="0 0 16 16" className="mr-2 h-4 w-4">
        <path d="M1 2h14l1 1v8l-1 1h-3v3l-4-3H1l-1-1V3Z" fill="#ee8a24" />
        <path d="M1 2h14v4H1Z" fill="#f8b45e" />
        <path d="M3 8h2M7 8h2M11 8h2" stroke="#fff" strokeWidth="1.500" />
      </svg>
      1 Alert
    </div>
  </footer>
);

const App = () => {
  return (
    <div className="flex h-screen min-h-[600px] flex-col overflow-hidden border-t border-r border-[#2b2328] bg-[#eeeeee] font-['Open_Sans','Noto_Sans',sans-serif]">
      <nav className="flex h-5 shrink-0 items-center gap-3.5 bg-linear-to-b from-white via-[#dfe3ee] to-[#e3e6f2] pl-2 text-xs text-[#5b5f66]">
        {menus.map((menu) => <button key={menu} type="button">{menu}</button>)}
      </nav>
      <MainToolbar />
      <div className="flex min-h-0 flex-1">
        <aside className="flex w-[277px] shrink-0 flex-col">
          <div className="mb-1.5 flex h-5 shrink-0 text-xs" role="tablist">
            <button type="button" role="tab" aria-selected="true" className="flex w-[139px] items-center justify-center bg-linear-to-b from-white via-[#e4e4e4] to-[#f2f2f2] font-bold text-[#35504e]">
              <svg viewBox="0 0 14 14" className="mr-1 h-[14px] w-[14px]">
                <circle cx="7" cy="7" r="6" fill="#a9b56e" stroke="#8c9662" strokeDasharray="2 1" />
                <path d="M3 4l3-1 1 3-2 1ZM8 8l3-1v3Z" fill="#5d7a35" />
                <path d="M4 11l6-7" stroke="#e9edd5" />
              </svg>
              Applications
            </button>
            <button type="button" role="tab" aria-selected="false" className="flex flex-1 items-center justify-center border-2 border-t-[#777] border-r-[#aaa] border-b-[#8a8a8a] border-l-[#555] bg-linear-to-b from-[#d2d2d2] to-[#bdbdbd] text-[#444]">
              <svg viewBox="0 0 14 14" className="mr-1 h-[14px] w-[14px]">
                <circle cx="7" cy="7" r="5" fill="#d7ece2" stroke="#6bab92" strokeWidth="2" strokeDasharray="5 2" />
                <path d="M7 9l2 5 2-3Z" fill="#3f8f6f" />
              </svg>
              Navigators
            </button>
          </div>
          <AppList />
          <div className="h-1.5 shrink-0" />
          <ModelTree />
        </aside>
        <main className="ml-[5px] flex min-w-0 flex-1 flex-col border-l border-[#aaa]">
          <DrawToolbars />
          <section className="mr-[3px] ml-0.5 flex min-h-0 flex-1 flex-col border-2 border-[#6d716f]">
            <ViewToolbar />
            <Scene />
            <div className="h-[17px] shrink-0 border-t border-[#999] bg-[#eee] p-px">
              <div className="h-[14px] rounded-xs border border-[#8a8a8a] bg-linear-to-b from-[#f3f3f3] to-[#c9c9c9]" />
            </div>
          </section>
          <div className="h-[3px] shrink-0" />
          <RoomTable />
        </main>
      </div>
      <StatusBar />
    </div>
  );
};

export default App;
